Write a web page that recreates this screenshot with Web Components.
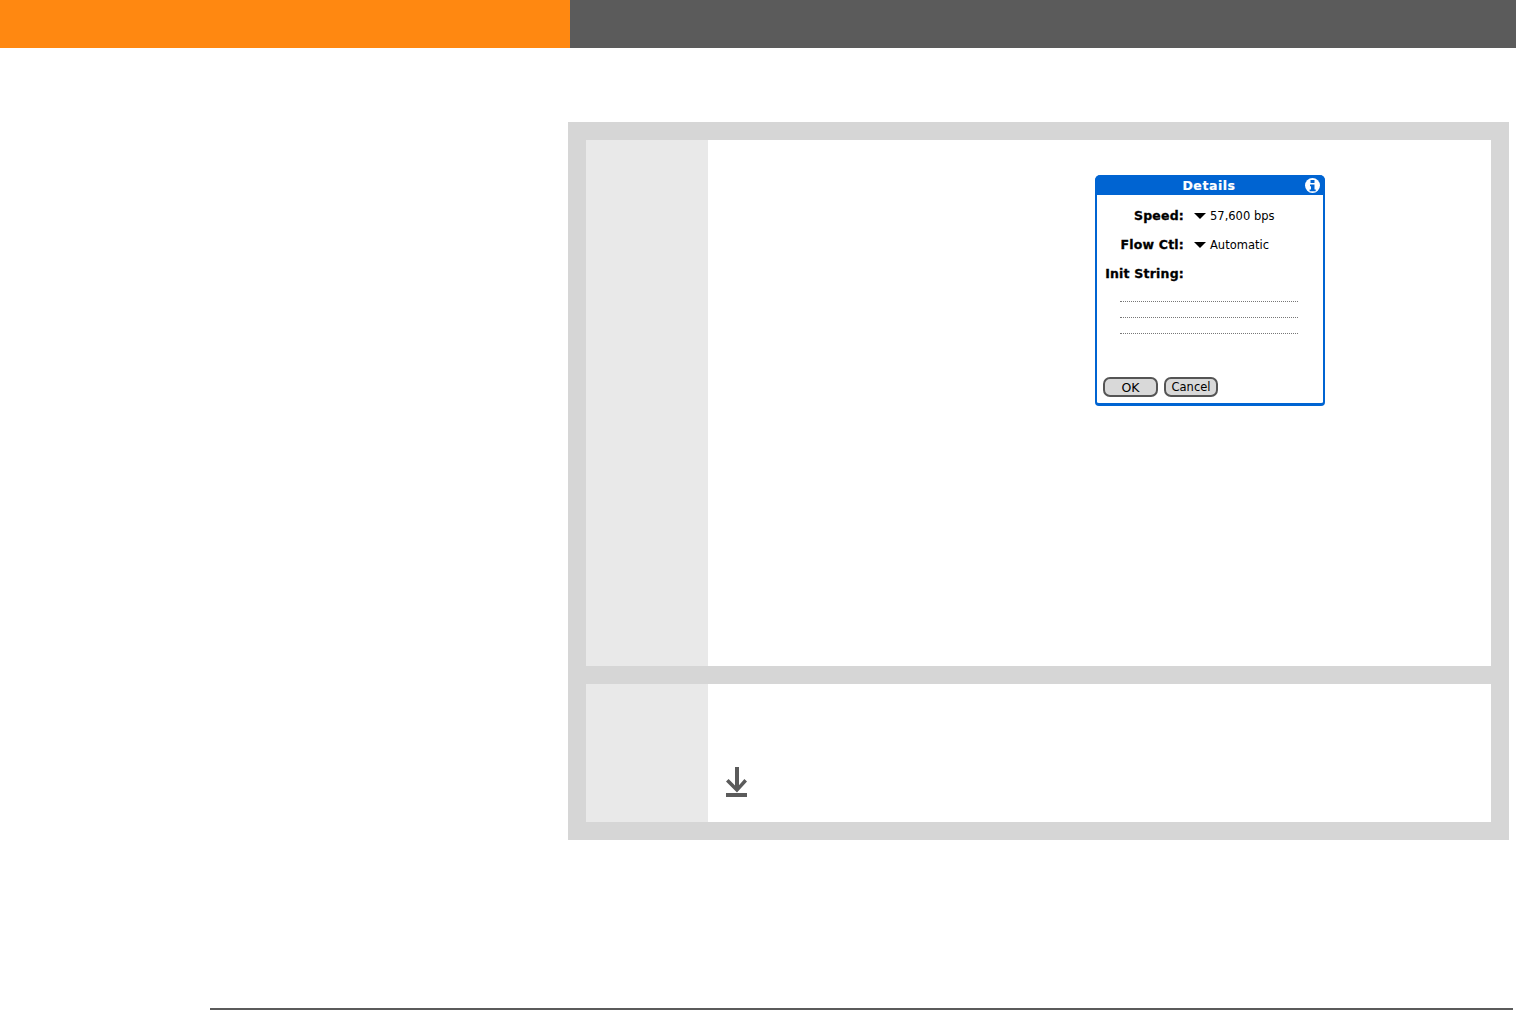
<!DOCTYPE html>
<html>
<head>
<meta charset="utf-8">
<title>Details</title>
<style>
  html, body { margin: 0; padding: 0; background: #fff; }
  body { height: 1010px; overflow: hidden; display: flex; flex-direction: column; font-family: "Liberation Sans", Arial, sans-serif; }
</style>
</head>
<body>
<top-bar></top-bar>
<step-panel>
  <step-row height="526">
    <details-dialog></details-dialog>
  </step-row>
  <step-row height="138">
    <tip-icon></tip-icon>
  </step-row>
</step-panel>
<page-footer></page-footer>

<script>
class TopBar extends HTMLElement {
    constructor() {
        super();
        this.attachShadow({mode: "open"}).innerHTML = `
        <style>
            :host { display: flex; height: 48px; flex: none; }
            .orange { width: 570px; background: #ff8811; }
            .grey { flex: 1; background: #5b5b5b; }
        </style>
        <div class="orange"></div>
        <div class="grey"></div>`;
    }
}

class StepPanel extends HTMLElement {
    constructor() {
        super();
        this.attachShadow({mode: "open"}).innerHTML = `
        <style>
            :host {
                display: flex;
                flex-direction: column;
                flex: none;
                gap: 18px;
                width: 905px;
                margin: 74px 0 0 568px;
                padding: 18px;
                background: #d6d6d6;
            }
        </style>
        <slot></slot>`;
    }
}

class StepRow extends HTMLElement {
    constructor() {
        super();
        this.attachShadow({mode: "open"}).innerHTML = `
        <style>
            :host { display: flex; }
            .num { width: 122px; flex: none; background: #e9e9e9; }
            .body { flex: 1; background: #fff; }
        </style>
        <div class="num"></div>
        <div class="body"><slot></slot></div>`;
    }
    connectedCallback() {
        this.style.height = this.getAttribute("height") + "px";
    }
}

class DetailsDialog extends HTMLElement {
    constructor() {
        super();
        this.attachShadow({mode: "open"}).innerHTML = `
        <style>
            :host {
                display: flex;
                flex-direction: column;
                box-sizing: border-box;
                width: 230px;
                height: 231px;
                margin: 35px 0 0 387px;
                border: 2px solid #0064d2;
                border-top: 0;
                border-bottom-width: 3px;
                border-radius: 6px 6px 4px 4px;
                background: #fff;
                color: #000;
                font: 12px "DejaVu Sans", sans-serif;
            }
            .title {
                display: flex;
                align-items: center;
                justify-content: center;
                position: relative;
                height: 20px;
                margin: 0 -2px;
                padding-right: 2px;
                border-radius: 5px 5px 0 0;
                background: #0064d2;
                color: #fff;
                font-weight: bold;
                font-size: 12.5px;
                letter-spacing: 0.55px;
                -webkit-text-stroke: 0.2px #fff;
            }
            .info { position: absolute; right: 5px; top: 3px; }
            .form {
                display: grid;
                grid-template-columns: 82px 12px auto;
                grid-auto-rows: 29px;
                align-items: center;
                margin: 6px 0 0 5px;
            }
            .label {
                font-weight: bold;
                font-size: 12.5px;
                text-align: right;
                white-space: nowrap;
                letter-spacing: .2px;
                -webkit-text-stroke: 0.3px #000;
            }
            .arrow { width: 12px; height: 6px; margin-left: 10px; }
            .value { margin-left: 14px; white-space: nowrap; font-size: 11.5px; }
            .lines { display: flex; flex-direction: column; gap: 15px; margin: 13px 0 0 23px; width: 178px; }
            .lines div { border-top: 1px dotted #777; }
            .buttons { display: flex; gap: 6px; margin: auto 0 6px 6px; }
            .btn {
                box-sizing: border-box;
                display: flex;
                align-items: center;
                justify-content: center;
                height: 20px;
                border: 2px solid #555;
                border-radius: 7px;
                background: #d9d9d9;
                font-size: 11.5px;
            }
            .ok { width: 55px; font-size: 12.5px; }
            .cancel { width: 54px; }
        </style>
        <div class="title">Details
            <svg class="info" width="15" height="15" viewBox="0 0 15 15">
                <circle cx="7.5" cy="7.5" r="7.5" fill="#fff"/>
                <rect x="5.5" y="2" width="4" height="3" fill="#0064d2"/>
                <path d="M5 6.5h4.5v5h1.2v1.7H4.6v-1.7h1.4V8.2H5z" fill="#0064d2"/>
            </svg>
        </div>
        <div class="form">
            <span class="label">Speed:</span>
            <svg class="arrow" viewBox="0 0 12 6"><path d="M0 0h12L6 6z" fill="#000"/></svg>
            <span class="value">57,600 bps</span>
            <span class="label">Flow Ctl:</span>
            <svg class="arrow" viewBox="0 0 12 6"><path d="M0 0h12L6 6z" fill="#000"/></svg>
            <span class="value">Automatic</span>
            <span class="label">Init String:</span>
        </div>
        <div class="lines"><div></div><div></div><div></div></div>
        <div class="buttons">
            <div class="btn ok">OK</div>
            <div class="btn cancel">Cancel</div>
        </div>`;
    }
}

class TipIcon extends HTMLElement {
    constructor() {
        super();
        this.attachShadow({mode: "open"}).innerHTML = `
        <style>
            :host { display: block; width: 21px; height: 30px; margin: 83px 0 0 18px; }
            svg { display: block; }
        </style>
        <svg width="21" height="30" viewBox="0 0 21 30" fill="#5b5b5b">
            <rect x="9" y="0" width="4" height="23"/>
            <path d="M0 14.5 L2.6 12 L11 20.5 L18.4 12 L21 14.5 L11 25.5z"/>
            <rect x="0" y="26" width="21" height="4"/>
        </svg>`;
    }
}

class PageFooter extends HTMLElement {
    constructor() {
        super();
        this.attachShadow({mode: "open"}).innerHTML = `
        <style>
            :host { display: block; height: 2px; flex: none; margin: auto 3px 0 210px; background: #5b5b5b; }
        </style>`;
    }
}

customElements.define("top-bar", TopBar);
customElements.define("step-panel", StepPanel);
customElements.define("step-row", StepRow);
customElements.define("details-dialog", DetailsDialog);
customElements.define("tip-icon", TipIcon);
customElements.define("page-footer", PageFooter);
</script>
</body>
</html>
